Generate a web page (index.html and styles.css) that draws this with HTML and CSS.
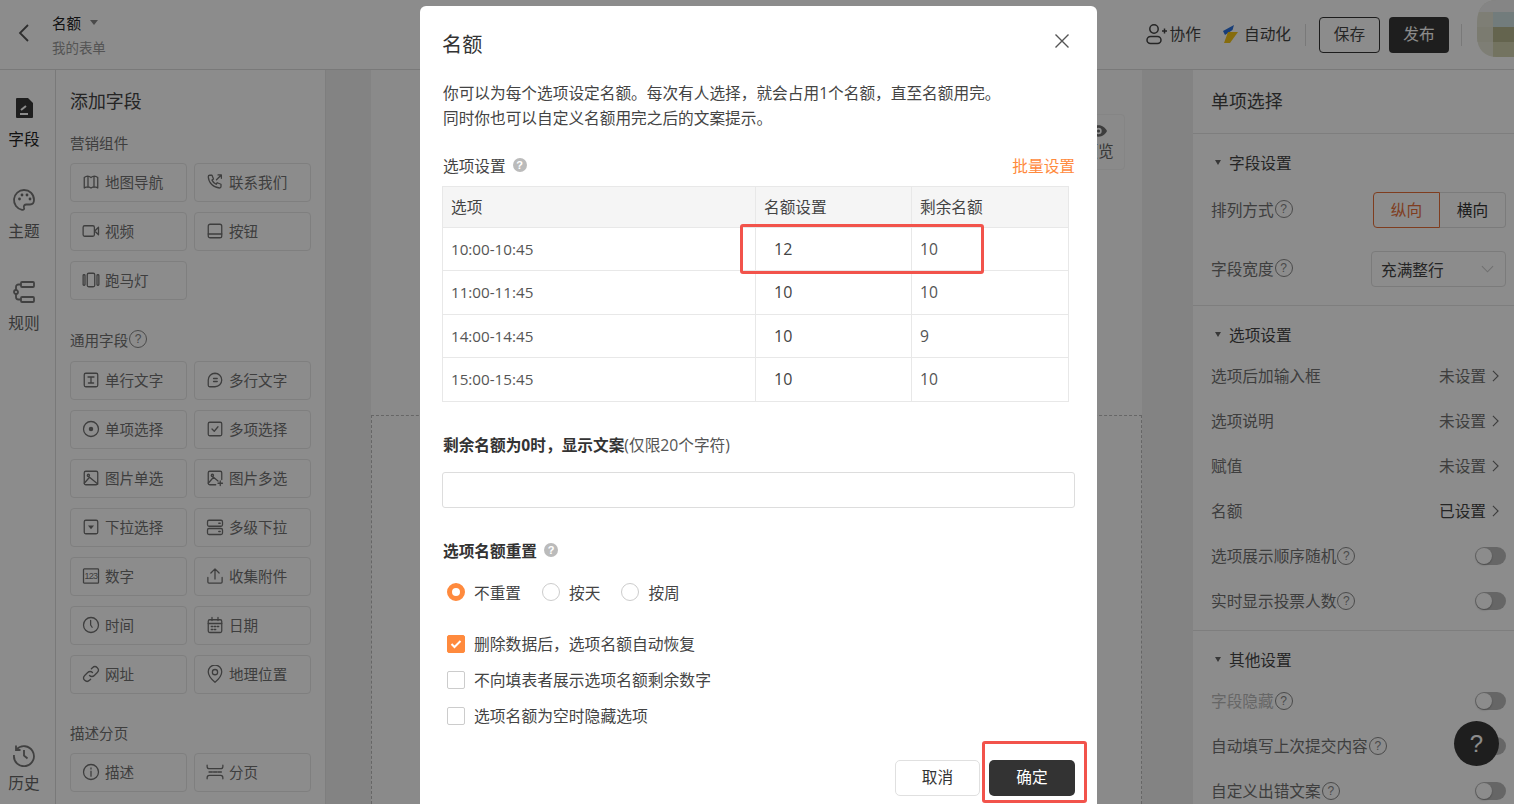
FILE: index.html
```html
<!DOCTYPE html>
<html lang="zh-CN">
<head>
<meta charset="utf-8">
<title>名额</title>
<link rel="stylesheet" href="styles.css">
</head>
<body>
<div class="app">
  <header class="topbar">
    <div class="top-left">
      <svg class="back" viewBox="0 0 12 20"><path d="M10 2 2 10l8 8"/></svg>
      <div class="doc">
        <div class="doc-name">名额<span class="doc-caret"></span></div>
        <div class="doc-sub">我的表单</div>
      </div>
    </div>
    <div class="top-right">
      <span class="top-link top-collab"><svg class="ic-collab" viewBox="0 0 22 22"><circle cx="8" cy="6" r="4.2"/><rect x="1" y="13.5" width="14" height="7" rx="3.5"/><path d="M16 8h5M18.5 5.5v5"/></svg>协作</span>
      <span class="top-link top-auto"><svg class="ic-auto" viewBox="0 0 16 18"><path class="auto-blue" d="M1 6 12 0l-1.500 5L3 10z"/><path class="auto-yellow" d="M6 7h10L8 18H2z"/></svg>自动化</span>
      <span class="top-div"></span>
      <button class="btn-save">保存</button>
      <button class="btn-pub">发布</button>
      <span class="top-div top-div-2"></span>
      <svg class="avatar" viewBox="0 0 37 57">
        <defs><clipPath id="av"><path d="M20 0h17v57H20C8 57 0 50 0 36V22C0 8 8 0 20 0z"/></clipPath></defs>
        <g clip-path="url(#av)">
          <rect width="37" height="57" fill="#e6e6d6"/>
          <rect x="16" y="12" width="21" height="15" fill="#cfe2e2"/>
          <rect x="16" y="27" width="21" height="15" fill="#b6b68e"/>
          <rect y="27" width="16" height="15" fill="#e0e0cc"/>
          <rect x="16" y="42" width="21" height="15" fill="#d2d2b0"/>
          <rect y="0" width="37" height="12" fill="#f2f2f2"/>
        </g>
      </svg>
    </div>
  </header>

  <div class="workspace">
    <nav class="rail">
      <div class="rail-item rail-on">
        <svg class="rail-ic" viewBox="0 0 24 24"><path class="doc-fill" d="M4 3a1 1 0 0 1 1-1h11l5 5v14a1 1 0 0 1-1 1H5a1 1 0 0 1-1-1z"/><path class="doc-mark" d="M8 18h8M9 14l5-4"/></svg>
        <span>字段</span>
      </div>
      <div class="rail-item">
        <svg class="rail-ic" viewBox="0 0 24 24"><path d="M12 2a10 10 0 0 0-2 19.8c2 .3 2.5-1 2-2.3-.6-1.700.5-3 2.300-3H18c2.500 0 4-1.600 4-4.500C22 6 17.500 2 12 2z"/><circle class="dot" cx="7.500" cy="11" r="1.400"/><circle class="dot" cx="10" cy="7" r="1.400"/><circle class="dot" cx="15" cy="7" r="1.400"/><circle class="dot" cx="18" cy="11" r="1.400"/></svg>
        <span>主题</span>
      </div>
      <div class="rail-item">
        <svg class="rail-ic" viewBox="0 0 24 24"><rect x="9" y="2" width="13" height="5" rx="1"/><rect x="9" y="17" width="13" height="5" rx="1"/><circle cx="4" cy="12" r="2"/><path d="M9 4.500H6.500A2.500 2.500 0 0 0 4 7v3M4 14v3a2.500 2.500 0 0 0 2.500 2.500H9"/></svg>
        <span>规则</span>
      </div>
      <div class="rail-item rail-end">
        <svg class="rail-ic" viewBox="0 0 24 24"><path d="M4.500 6.500A10 10 0 1 1 2 12M4 2.500v4.500h4.500M12 7v5.500l3.500 3"/></svg>
        <span>历史</span>
      </div>
    </nav>

    <aside class="fields">
      <h2 class="panel-title">添加字段</h2>
      <div class="group-label">营销组件</div>
      <div class="field-grid">
        <div class="field"><svg viewBox="0 0 24 24"><path d="M3 6c3-2.500 6-2.500 9 0 3-2.500 6-2.500 9 0v14c-3-2-6-2-9 0-3-2-6-2-9 0zM8 4.500v14.500M16 4.500v14.500"/></svg>地图导航</div>
        <div class="field"><svg viewBox="0 0 24 24"><path d="M5 3h3l2 5-2 1.500a11 11 0 0 0 5.500 5.500l1.500-2 5 2v3a2 2 0 0 1-2 2A16 16 0 0 1 3 5a2 2 0 0 1 2-2zM14 9l6-6M16 2.500h4.500V7"/></svg>联系我们</div>
        <div class="field"><svg viewBox="0 0 24 24"><rect x="1.500" y="5" width="15" height="14" rx="2"/><path d="m22 7-5 5 5 5z"/></svg>视频</div>
        <div class="field"><svg viewBox="0 0 24 24"><rect x="3" y="3" width="18" height="18" rx="2.500"/><path d="M3 16h18"/></svg>按钮</div>
        <div class="field"><svg viewBox="0 0 24 24"><rect x="7" y="3" width="10" height="18" rx="2"/><rect x="1.500" y="5" width="2.500" height="14" rx="1"/><rect x="20" y="5" width="2.500" height="14" rx="1"/></svg>跑马灯</div>
      </div>

      <div class="group-label group-help">通用字段<span class="q">?</span></div>
      <div class="field-grid">
        <div class="field"><svg viewBox="0 0 24 24"><rect x="3" y="3" width="18" height="18" rx="2"/><path d="M8 8h8M12 8v8M8.500 16h7"/></svg>单行文字</div>
        <div class="field"><svg viewBox="0 0 24 24"><path d="M12 3a9 9 0 0 1 0 18H5a2 2 0 0 1-2-2v-7a9 9 0 0 1 9-9zM10 10h5M10 14h5"/></svg>多行文字</div>
        <div class="field"><svg viewBox="0 0 24 24"><circle cx="12" cy="12" r="10"/><circle class="dot" cx="12" cy="12" r="3"/></svg>单项选择</div>
        <div class="field"><svg viewBox="0 0 24 24"><rect x="3" y="3" width="18" height="18" rx="2"/><path d="m8 12 3 3 5-6"/></svg>多项选择</div>
        <div class="field"><svg viewBox="0 0 24 24"><rect x="3" y="3" width="18" height="18" rx="2"/><circle cx="8.500" cy="8.500" r="1.500"/><path d="M3 19l7-8 11 9"/></svg>图片单选</div>
        <div class="field"><svg viewBox="0 0 24 24"><path d="M13 21H5a2 2 0 0 1-2-2V5a2 2 0 0 1 2-2h14a2 2 0 0 1 2 2v9"/><circle cx="8.500" cy="8.500" r="1.500"/><path d="M3 19l7-8 6 5M19 16v6M16 19h6"/></svg>图片多选</div>
        <div class="field"><svg viewBox="0 0 24 24"><rect x="3" y="3" width="18" height="18" rx="2"/><path class="dot" d="M8 10h8l-4 5z"/></svg>下拉选择</div>
        <div class="field"><svg viewBox="0 0 24 24"><rect x="2" y="3" width="20" height="8" rx="2"/><rect x="2" y="14" width="20" height="8" rx="2"/><path d="M17 7h2M17 18h2"/></svg>多级下拉</div>
        <div class="field"><svg viewBox="0 0 24 24"><rect x="2" y="2.500" width="20" height="19" rx="1"/><text x="12" y="16.500" class="ic-num">123</text></svg>数字</div>
        <div class="field"><svg viewBox="0 0 24 24"><path d="M12 16V3M6.500 8 12 2.500 17.500 8M2.500 14v6a1.500 1.500 0 0 0 1.500 1.500h16a1.500 1.500 0 0 0 1.500-1.500v-6"/></svg>收集附件</div>
        <div class="field"><svg viewBox="0 0 24 24"><circle cx="12" cy="12" r="10"/><path d="M11.500 6v6l2 3"/></svg>时间</div>
        <div class="field"><svg viewBox="0 0 24 24"><rect x="3" y="5" width="18" height="17" rx="2"/><path d="M3 10h18M8 2v4M16 2v4M7 14h2M11 14h2M15 14h2M7 18h2M11 18h2"/></svg>日期</div>
        <div class="field"><svg viewBox="0 0 24 24"><path d="M10 14a4.500 4.500 0 0 0 6.400 0l4-4A4.500 4.500 0 0 0 14 3.600l-1.500 1.500M14 10a4.500 4.500 0 0 0-6.400 0l-4 4a4.500 4.500 0 0 0 6.400 6.400l1.500-1.500"/></svg>网址</div>
        <div class="field"><svg viewBox="0 0 24 24"><path d="M12 23s9-7.500 9-14a9 9 0 0 0-18 0c0 6.500 9 14 9 14z"/><circle cx="12" cy="9.500" r="3.500"/></svg>地理位置</div>
      </div>

      <div class="group-label">描述分页</div>
      <div class="field-grid">
        <div class="field"><svg viewBox="0 0 24 24"><circle cx="12" cy="12" r="10"/><path d="M12 11v6.500M12 6.500v1.500"/></svg>描述</div>
        <div class="field"><svg viewBox="0 0 24 24"><path d="M1.500 3v1.500c0 2 1 3 3 3h15c2 0 3-1 3-3V3M1.500 21v-1.500c0-2 1-3 3-3h15c2 0 3 1 3 3V21M4 12h4.500M10 12h4.500M16 12h4.500"/></svg>分页</div>
      </div>
    </aside>

    <main class="stage">
      <div class="canvas">
        <div class="dropzone"></div>
        <div class="preview"><svg viewBox="0 0 24 16"><path class="dot" d="M12 0c5.500 0 9.500 3.500 12 8-2.500 4.500-6.500 8-12 8S2.500 12.500 0 8c2.500-4.500 6.500-8 12-8z"/><circle class="eye-w" cx="12" cy="8" r="4.500"/><circle class="dot" cx="12" cy="8" r="2.200"/></svg>预览</div>
      </div>
    </main>

    <aside class="props">
      <h2 class="props-title">单项选择</h2>
      <section class="prop-sec">
        <div class="sec-head">字段设置</div>
        <div class="prop-ctl ctl-first">
          <span class="prop-name">排列方式<span class="q">?</span></span>
          <div class="seg"><span class="seg-on">纵向</span><span class="seg-off">横向</span></div>
        </div>
        <div class="prop-ctl ctl-second">
          <span class="prop-name">字段宽度<span class="q">?</span></span>
          <div class="select">充满整行<svg viewBox="0 0 14 8"><path d="m1 1 6 6 6-6"/></svg></div>
        </div>
      </section>
      <section class="prop-sec">
        <div class="sec-head">选项设置</div>
        <div class="prop-row"><span class="prop-name">选项后加输入框</span><span class="prop-val">未设置<svg viewBox="0 0 8 14"><path d="m1 1 6 6-6 6"/></svg></span></div>
        <div class="prop-row"><span class="prop-name">选项说明</span><span class="prop-val">未设置<svg viewBox="0 0 8 14"><path d="m1 1 6 6-6 6"/></svg></span></div>
        <div class="prop-row"><span class="prop-name">赋值</span><span class="prop-val">未设置<svg viewBox="0 0 8 14"><path d="m1 1 6 6-6 6"/></svg></span></div>
        <div class="prop-row"><span class="prop-name">名额</span><span class="prop-val val-set">已设置<svg viewBox="0 0 8 14"><path d="m1 1 6 6-6 6"/></svg></span></div>
        <div class="prop-row"><span class="prop-name">选项展示顺序随机<span class="q">?</span></span><span class="toggle"></span></div>
        <div class="prop-row"><span class="prop-name">实时显示投票人数<span class="q">?</span></span><span class="toggle"></span></div>
      </section>
      <section class="prop-sec sec-last">
        <div class="sec-head">其他设置</div>
        <div class="prop-row"><span class="prop-name name-off">字段隐藏<span class="q">?</span></span><span class="toggle"></span></div>
        <div class="prop-row"><span class="prop-name">自动填写上次提交内容<span class="q">?</span></span><span class="toggle"></span></div>
        <div class="prop-row"><span class="prop-name">自定义出错文案<span class="q">?</span></span><span class="toggle"></span></div>
      </section>
      <div class="help-fab">?</div>
    </aside>
  </div>
</div>

<div class="mask"></div>

<div class="modal">
  <div class="modal-head">
    <h1>名额</h1>
    <svg class="close" viewBox="0 0 16 16"><path d="m1.500 1.500 13 13M14.500 1.500l-13 13"/></svg>
  </div>
  <p class="desc">你可以为每个选项设定名额。每次有人选择，就会占用1个名额，直至名额用完。<br>同时你也可以自定义名额用完之后的文案提示。</p>

  <div class="set-head">
    <span class="set-label">选项设置<span class="qf">?</span></span>
    <a class="batch">批量设置</a>
  </div>
  <table class="quota">
    <thead><tr><th class="c1">选项</th><th class="c2">名额设置</th><th class="c3">剩余名额</th></tr></thead>
    <tbody>
      <tr class="r1"><td class="time">10:00-10:45</td><td class="num">12</td><td>10</td></tr>
      <tr class="r2"><td class="time">11:00-11:45</td><td class="num">10</td><td>10</td></tr>
      <tr class="r1"><td class="time">14:00-14:45</td><td class="num">10</td><td>9</td></tr>
      <tr class="r2"><td class="time">15:00-15:45</td><td class="num">10</td><td>10</td></tr>
    </tbody>
  </table>

  <div class="empty-label"><b>剩余名额为0时，显示文案</b>(仅限20个字符)</div>
  <input class="empty-input" type="text">

  <div class="reset-label"><b>选项名额重置</b><span class="qf">?</span></div>
  <div class="radios">
    <label class="radio"><span class="rd rd-on"></span>不重置</label>
    <label class="radio"><span class="rd"></span>按天</label>
    <label class="radio"><span class="rd"></span>按周</label>
  </div>
  <div class="checks">
    <label class="check"><span class="cb cb-on"><svg viewBox="0 0 12 10"><path d="m1.500 5 3 3 6-6"/></svg></span>删除数据后，选项名额自动恢复</label>
    <label class="check"><span class="cb"></span>不向填表者展示选项名额剩余数字</label>
    <label class="check"><span class="cb"></span>选项名额为空时隐藏选项</label>
  </div>
  <div class="modal-foot">
    <button class="btn-cancel">取消</button>
    <button class="btn-ok">确定</button>
  </div>

  <div class="mark mark-row"></div>
  <div class="mark mark-ok"></div>
</div>
</body>
</html>
```

FILE: styles.css
```css
* { box-sizing: border-box; }
html, body { margin: 0; height: 100%; overflow: hidden; }
body {
  font-family: "Open Sans", "Noto Sans CJK SC", "Liberation Sans", sans-serif;
  font-size: 15.68px;
  color: #333;
  background: #fff;
}
button { font: inherit; cursor: pointer; }

.app { height: 804px; display: flex; flex-direction: column; }

/* top bar */
.topbar {
  height: 70px;
  flex: none;
  display: flex;
  justify-content: space-between;
  align-items: center;
  border-bottom: 1px solid #ddd;
  background: #fff;
}
.top-left { display: flex; align-items: center; }
.back { width: 12px; height: 20px; margin: 0 22px 4px 18px; fill: none; stroke: #555; stroke-width: 1.800; }
.doc { padding-top: 2px; }
.doc-name { font-size: 14.56px; line-height: 20px; color: #222; display: flex; align-items: center; }
.doc-caret { width: 0; height: 0; margin: -2px 0 0 9px; border: 4px solid transparent; border-top: 5px solid #888; border-bottom: 0; }
.doc-sub { font-size: 13.44px; line-height: 20px; margin-top: 5px; color: #999; }
.top-right { display: flex; align-items: center; height: 100%; }
.top-link { display: flex; align-items: center; color: #444; margin-bottom: 2px; }
.ic-collab { width: 22px; height: 22px; margin-right: 2px; fill: none; stroke: #444; stroke-width: 1.500; }
.top-collab { margin-right: 21px; }
.ic-auto { width: 16px; height: 18px; margin-right: 6px; }
.auto-blue { fill: #2a6fdb; }
.auto-yellow { fill: #f5c518; }
.top-div { width: 1px; height: 22px; margin: 0 13px 0 14px; background: #ddd; }
.btn-save { width: 61px; height: 36px; margin-right: 9px; padding: 0 0 2px; background: #fff; border: 1px solid #333; border-radius: 4px; color: #444; }
.btn-pub { width: 60px; height: 36px; padding: 0 0 2px; background: #383838; border: 0; border-radius: 4px; color: #fff; }
.top-div-2 { margin: 0 15px 0 12px; }
.avatar { width: 37px; height: 57px; align-self: flex-start; }

/* workspace */
.workspace { flex: 1; min-height: 0; display: flex; }

.rail {
  width: 56px;
  flex: none;
  display: flex;
  flex-direction: column;
  padding: 26px 7px 0 0;
  border-right: 1px solid #ddd;
  background: #fff;
}
.rail-item { height: 92px; display: flex; flex-direction: column; align-items: center; color: #666; line-height: 22px; }
.rail-item span { margin-top: 8px; }
.rail-on { color: #222; }
.rail-ic { width: 24px; height: 24px; fill: none; stroke: #777; stroke-width: 1.800; }
.rail-on .rail-ic { stroke: none; }
.rail-on .doc-fill { fill: #383838; }
.rail-on .doc-mark { fill: none; stroke: #fff; stroke-width: 2; }
.rail-end { margin-top: auto; height: auto; padding-bottom: 10px; }
.rail-end span { margin-top: 5px; }
.dot { fill: #6f6f6f; stroke: none; }

.fields { width: 270px; flex: none; padding-left: 14px; border-right: 1px solid #e6e6e6; background: #fff; color: #777; }
.panel-title { height: 62px; margin: 0; padding-top: 18px; font-size: 17.92px; font-weight: 400; line-height: 26px; color: #444; }
.group-label { height: 22px; margin-bottom: 9px; padding-bottom: 2px; display: flex; align-items: center; font-size: 14.56px; color: #717171; }
.group-help { height: 24px; }
.field-grid { display: grid; grid-template-columns: 117px 117px; column-gap: 7px; row-gap: 10px; margin-bottom: 28px; grid-auto-rows: 39px; }
.field { display: flex; align-items: center; padding: 0 0 2px 11px; border: 1px solid #e8e8e8; border-radius: 4px; font-size: 14.56px; color: #717171; }
.field svg { width: 18px; height: 18px; margin-right: 5px; flex: none; fill: none; stroke: #717171; stroke-width: 1.700; stroke-linecap: round; stroke-linejoin: round; }
.field .ic-num { fill: #717171; stroke: none; font-size: 12px; letter-spacing: -1px; text-anchor: middle; font-family: "Liberation Sans", sans-serif; }

.q {
  width: 18px; height: 18px; margin-left: 1px;
  display: inline-flex; align-items: center; justify-content: center;
  border: 1px solid #888; border-radius: 50%;
  font-size: 12px; line-height: 1; color: #888; flex: none;
  font-family: "Liberation Sans", sans-serif;
}

/* stage */
.stage { flex: 1; min-width: 0; padding: 0 51px 0 45px; background: #eee; }
.canvas { position: relative; height: 100%; background: #fbfbfb; padding-top: 345px; }
.dropzone { height: 100%; border: 1px dashed #bbb; border-bottom: 0; }
.preview {
  position: absolute; left: 700px; top: 44px;
  width: 54px; height: 56px;
  display: flex; flex-direction: column; align-items: center; justify-content: center;
  border: 1px solid #f2f2f2; border-radius: 4px; background: #fbfbfb; color: #666; line-height: 22px;
}
.preview svg { width: 17px; height: 12px; margin: 2px 0 3px; }
.eye-w { fill: #fff; }

/* props */
.props { position: relative; width: 321px; flex: none; padding: 0 8px 0 18px; background: #fff; color: #777; overflow: hidden; }
.props-title { height: 64px; margin: 0 -8px 0 -18px; padding: 18px 0 0 18px; font-size: 17.92px; font-weight: 400; line-height: 26px; color: #444; border-bottom: 1px solid #e6e6e6; }
.prop-sec { margin: 0 -8px 0 -18px; padding: 11px 8px 6px 18px; border-bottom: 1px solid #e6e6e6; }
.sec-last { border-bottom: 0; }
.sec-head { height: 37px; padding-bottom: 2px; display: flex; align-items: center; color: #444; }
.sec-head::before { content: ""; width: 0; height: 0; margin: 0 8px 0 4px; border: 3.500px solid transparent; border-top: 5px solid #666; border-bottom: 0; }
.prop-ctl { height: 36px; display: flex; align-items: center; justify-content: space-between; }
.ctl-first { margin-top: 10px; }
.ctl-second { margin: 23px 0 12px; }
.prop-ctl .prop-name { padding-bottom: 2px; }
.prop-name { display: flex; align-items: center; color: #717171; }
.name-off { color: #bbb; }
.seg { display: flex; height: 36px; width: 133px; }
.seg span { padding-bottom: 2px; display: flex; align-items: center; justify-content: center; }
.seg-on { width: 67px; border: 1px solid #e8703a; border-radius: 4px 0 0 4px; color: #e8703a; }
.seg-off { width: 66px; border: 1px solid #e0e0e0; border-left: 0; border-radius: 0 4px 4px 0; color: #333; }
.select { width: 135px; height: 36px; padding: 0 11px 0 9px; display: flex; align-items: center; justify-content: space-between; border: 1px solid #e0e0e0; border-radius: 4px; color: #444; }
.select svg { width: 13px; height: 8px; fill: none; stroke: #ccc; stroke-width: 1.200; }
.prop-row { height: 45px; padding-bottom: 2px; display: flex; align-items: center; justify-content: space-between; }
.prop-val { display: flex; align-items: center; color: #717171; }
.prop-val svg { width: 7px; height: 12px; margin: 0 7px 0 6px; fill: none; stroke: #717171; stroke-width: 1.300; }
.val-set { color: #444; }
.toggle { position: relative; width: 31px; height: 18px; border-radius: 9px; background: #bbb; }
.toggle::after { content: ""; position: absolute; left: 1px; top: 1px; width: 16px; height: 16px; border-radius: 50%; background: #fff; box-shadow: 0 1px 2px rgba(0,0,0,.3); }
.help-fab {
  position: absolute; left: 261px; top: 651px;
  width: 45px; height: 45px; border-radius: 50%;
  display: flex; align-items: center; justify-content: center;
  background: #383838; color: #fff; font-size: 24px;
  font-family: "Liberation Sans", sans-serif;
}

/* mask */
.mask { position: fixed; inset: 0; background: rgba(0,0,0,.45); }

/* modal */
.modal {
  position: fixed; left: 420px; top: 6px;
  width: 677px; height: 830px;
  padding: 0 22px;
  background: #fff; border-radius: 6px;
  color: #333;
}
.modal-head { height: 75px; display: flex; align-items: center; justify-content: space-between; }
.modal-head h1 { margin: 0; font-size: 20.16px; font-weight: 400; color: #333; }
.close { width: 16px; height: 16px; margin: 0 5px 6px 0; fill: none; stroke: #555; stroke-width: 1.400; }
.desc { margin: 0 0 0 1px; line-height: 25px; color: #444; }
.set-head { height: 24px; margin: 23px 0 8px; padding-bottom: 2px; display: flex; align-items: center; justify-content: space-between; }
.set-label { margin-left: 1px; display: flex; align-items: center; color: #444; }
.qf {
  width: 14px; height: 14px; margin-left: 7px;
  display: inline-flex; align-items: center; justify-content: center;
  border-radius: 50%; background: #bbb; color: #fff;
  font-size: 11px; font-weight: 700; line-height: 1;
  font-family: "Liberation Sans", sans-serif;
}
.batch { color: #ff8a3d; }
.quota { width: 627px; table-layout: fixed; border-collapse: collapse; }
.quota th, .quota td { padding: 0 0 0 8px; border: 1px solid #e8e8e8; text-align: left; font-weight: 400; font-size: 15.68px; color: #555; }
.quota th { height: 41px; padding-bottom: 2px; background: #f5f5f5; color: #444; }
.quota .c1 { width: 313px; }
.quota .c2 { width: 156px; }
.r1 td { height: 43px; }
.r2 td { height: 44px; padding-bottom: 1px; }
.quota .time { font-size: 15.2px; }
.quota .num { padding-left: 18px; font-size: 16px; color: #444; }
.empty-label { height: 22px; margin: 32px 0 0 1px; padding-bottom: 2px; display: flex; align-items: center; color: #555; }
.empty-label b { color: #333; }
.empty-input { display: block; width: 633px; height: 36px; margin-top: 16px; border: 1px solid #ddd; border-radius: 3px; background: #fff; outline: 0; }
.reset-label { height: 22px; margin: 32px 0 0 1px; padding-bottom: 2px; display: flex; align-items: center; color: #333; }
.radios { height: 24px; margin: 18px 0 0 5px; display: flex; gap: 21px; }
.radio, .check { display: flex; align-items: center; color: #444; }
.rd { width: 18px; height: 18px; margin-right: 9px; border: 1px solid #ccc; border-radius: 50%; background: #fff; }
.rd-on { border: 5px solid #ff8a3d; }
.checks { margin: 28px 0 0 5px; display: flex; flex-direction: column; gap: 12px; }
.check { height: 24px; padding-bottom: 2px; font-size: 15.8px; }
.cb { width: 18px; height: 18px; margin: 2px 9px 0 0; display: flex; align-items: center; justify-content: center; border: 1px solid #ccc; border-radius: 2px; background: #fff; }
.cb-on { background: #ff8a3d; border-color: #ff8a3d; }
.cb svg { width: 12px; height: 10px; fill: none; stroke: #fff; stroke-width: 2; }
.modal-foot { margin-top: 32px; display: flex; justify-content: flex-end; gap: 9px; }
.btn-cancel { width: 85px; height: 36px; padding: 0 0 3px; background: #fff; border: 1px solid #e0e0e0; border-radius: 5px; color: #333; }
.btn-ok { width: 86px; height: 36px; padding: 0 0 3px; background: #333; border: 0; border-radius: 5px; color: #fff; }

/* red annotation frames */
.mark { position: absolute; border: 3px solid #f2534b; border-radius: 3px; pointer-events: none; }
.mark-row { left: 320px; top: 218px; width: 244px; height: 50px; }
.mark-ok { left: 562px; top: 735px; width: 105px; height: 62px; }
```
